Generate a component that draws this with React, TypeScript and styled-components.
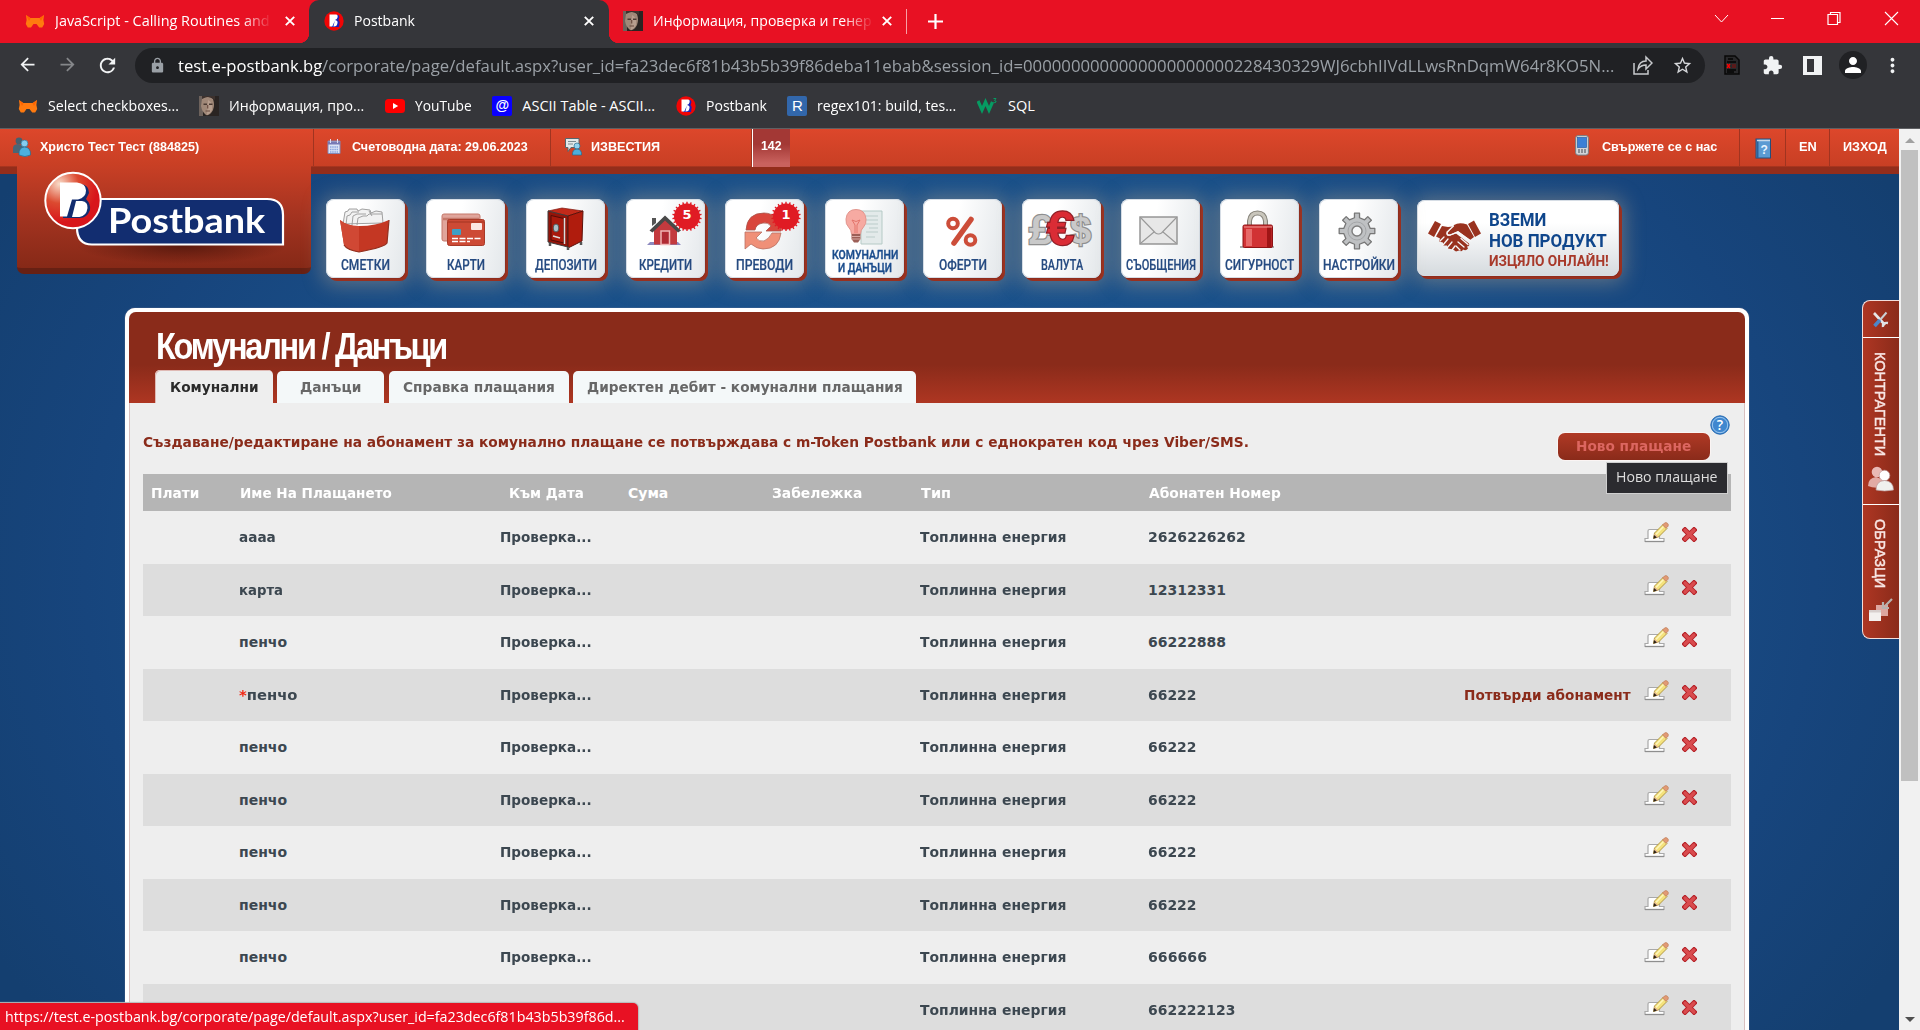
import React, { useLayoutEffect, useRef, useState } from "react";
import styled, { createGlobalStyle } from "styled-components";
import { MdExtension, MdLock, MdStarBorder, MdArrowBack, MdArrowForward, MdRefresh, MdPerson, MdMoreVert } from "react-icons/md";

const ui = `"Open Sans", "Noto Sans", sans-serif`;
const body = `"DejaVu Sans", sans-serif`;
const arial = `"Liberation Sans", sans-serif`;

const Global = createGlobalStyle`
  * { box-sizing: border-box; }
  body { margin: 0; background: #35363a; overflow: hidden; }
  svg { display: block; flex: none; }
`;

/* Text squeezed or stretched to a known advance width */
const FitBox = styled.span<{ $w: number }>`
  display: inline-block;
  flex: none;
  width: ${(p) => p.$w}px;
  white-space: nowrap;
  text-align: left;
`;
const FitInner = styled.span`
  display: inline-block;
  transform-origin: 0 50%;
`;
function Fit({ w, children }: { w: number; children: React.ReactNode }) {
  const ref = useRef<HTMLSpanElement>(null);
  const [scale, setScale] = useState(1);
  useLayoutEffect(() => {
    if (ref.current) setScale(w / ref.current.offsetWidth);
  }, [w]);
  return (
    <FitBox $w={w}>
      <FitInner ref={ref} style={{ transform: `scaleX(${scale})` }}>{children}</FitInner>
    </FitBox>
  );
}

/* ---------- browser chrome ---------- */
const Screen = styled.div`
  position: relative;
  width: 1920px;
  height: 1030px;
  overflow: hidden;
  display: flex;
  flex-direction: column;
  font-family: ${ui};
`;
const TabStrip = styled.div`
  height: 43px;
  flex: none;
  display: flex;
  background: #e81123;
  color: #fff;
  font-size: 14.5px;
`;
const BrowserTab = styled.div<{ $w: number; $pl: number; $active?: boolean }>`
  position: relative;
  width: ${(p) => p.$w}px;
  padding: 0 0 2px ${(p) => p.$pl}px;
  display: flex;
  align-items: center;
  gap: 10px;
  background: ${(p) => (p.$active ? "#35363a" : "transparent")};
  border-radius: 10px 10px 0 0;
  ${(p) =>
    p.$active &&
    `&::before, &::after { content: ""; position: absolute; bottom: 0; width: 10px; height: 10px; }
     &::before { left: -10px; background: radial-gradient(circle at 0 0, #e81123 10px, #35363a 10.5px); }
     &::after { right: -10px; background: radial-gradient(circle at 100% 0, #e81123 10px, #35363a 10.5px); }`}
`;
const Fade = styled.span`
  mask-image: linear-gradient(90deg, #000 87%, transparent 101%);
`;
const CloseSlot = styled.span<{ $r: number }>`
  margin-left: auto;
  margin-right: ${(p) => p.$r}px;
`;
const TabDivider = styled.div`
  width: 1px;
  height: 25px;
  margin: 9px 21px 0 0;
  background: #f7a0a6;
`;
const NewTab = styled.div`
  padding-top: 14px;
`;
const WindowButtons = styled.div`
  margin: 9px 21px 0 auto;
  display: flex;
  gap: 42px;
  & > :first-child { margin-right: -1px; }
`;
const Toolbar = styled.div`
  height: 43px;
  flex: none;
  display: flex;
  align-items: center;
  background: #35363a;
  padding: 1px 0 0 17px;
`;
const NavIcons = styled.div`
  display: flex;
  gap: 18.5px;
  width: 118px;
  color: #f1f3f4;
  & > :nth-child(2) { color: #85878a; }
`;
const Omnibox = styled.div`
  width: 1570px;
  height: 35px;
  border-radius: 18px;
  background: #202124;
  display: flex;
  align-items: center;
  padding-left: 14px;
  font-size: 17px;
  color: #9aa0a6;
  & > svg:first-child { margin-right: 12px; }
`;
const Host = styled.span`
  color: #fff;
`;
const OmniActions = styled.div`
  margin: 0 12px 0 auto;
  display: flex;
  align-items: center;
  gap: 19px;
  color: #d5d7da;
`;
const Extensions = styled.div`
  display: flex;
  align-items: center;
  padding-left: 19px;
  color: #f1f3f4;
  & > :nth-child(2) { margin-left: 22px; }
  & > :nth-child(3) { margin-left: 20px; }
  & > :nth-child(4) { margin-left: 17px; }
  & > :nth-child(5) { margin-left: 14px; }
`;
const Profile = styled.div`
  width: 28px;
  height: 28px;
  border-radius: 50%;
  background: #202124;
  display: grid;
  place-items: center;
`;
const Bookmarks = styled.div`
  height: 43px;
  flex: none;
  display: flex;
  align-items: center;
  padding: 0 0 3px 18px;
  gap: 20.6px;
  background: #35363a;
  border-bottom: 1px solid #5f6063;
  color: #fff;
  font-size: 14.5px;
`;
const Bookmark = styled.div`
  display: flex;
  align-items: center;
  gap: 9.5px;
  &:nth-child(n + 3) { gap: 10px; }
`;
const LetterIcon = styled.span<{ $bg: string; $bold?: boolean }>`
  width: 20px;
  height: 20px;
  border-radius: 2px;
  background: ${(p) => p.$bg};
  color: #fff;
  font: ${(p) => (p.$bold ? "bold 14px" : "15px")} / 19px ${arial};
  text-align: center;
`;

const Fox = () => (
  <svg width="20" height="20" viewBox="0 0 20 20">
    <path d="M1 4l4.500 3h9L19 4l-.6 5 .8 4-2 3.600h-3L11.500 13h-3L6 16.600H2.800L.8 13l.8-4z" fill="#ff7a0f" />
    <path d="M1 4l4.500 3.500L4 10zM19 4l-4.500 3.500L16 10z" fill="#ff6400" />
  </svg>
);
const Face = () => (
  <svg width="20" height="20" viewBox="0 0 20 20">
    <rect width="20" height="20" fill="#2a2422" />
    <path d="M0 0h4v20H0z" fill="#6d625c" />
    <path d="M3 3q6-4 11 0 2 6 0 11-3 6-7 5-4-3-5-9z" fill="#a08878" />
    <path d="M9 4q5 2 4 10-2 4-5 5z" fill="#b79e8e" />
    <path d="M4.500 8.200h3.500M10 8.200h3.500" stroke="#4b3a32" strokeWidth="1.600" />
    <path d="M6.500 15h4.500M8.700 9v3.500" stroke="#6a4c40" strokeWidth="1.200" />
    <path d="M3 3q6-5 13 1V0H3z" fill="#3d322e" />
  </svg>
);
const PbIcon = () => (
  <svg width="20" height="20" viewBox="0 0 20 20">
    <circle cx="10" cy="10" r="9.700" fill="#f00505" />
    <path d="M6 4h8.500l1 2-1 3 1.200 2-.7 5H7z" fill="#1c22b8" />
    <path d="M5.500 3.500H12q2 0 1.600 2.800Q13.200 8.500 11 9q3 .5 2.500 3-.5 3.500-3.500 3.500h-.6l1.400-5.800-2.500 5.800H5.500z" fill="#fff" />
  </svg>
);
const YouTube = () => (
  <svg width="20" height="20" viewBox="0 0 20 20">
    <rect x="0" y="3" width="20" height="14" rx="3.500" fill="#f00" />
    <path d="M8 7l5.200 3L8 13z" fill="#fff" />
  </svg>
);
const W3 = () => (
  <svg width="21" height="20" viewBox="0 0 21 20">
    <path d="M1 5l4 9 3.500-8 3.500 8 3.500-8" fill="none" stroke="#069b62" strokeWidth="3.200" />
    <path d="M16.500 2.500h2.500l-1.500 2q2 .2 1.500 1.500-1 1.200-2.500.3" fill="none" stroke="#069b62" strokeWidth="1" />
  </svg>
);
const Cross = () => (
  <svg width="10" height="10" viewBox="0 0 10 10">
    <path d="M.8.800l8.400 8.400M9.200.800L.8 9.200" stroke="#fff" strokeWidth="1.900" />
  </svg>
);

/* ---------- bank page ---------- */
const Page = styled.div`
  flex: 1;
  display: flex;
  min-height: 0;
`;
const Main = styled.div`
  position: relative;
  width: 1899px;
  overflow: hidden;
  background: radial-gradient(ellipse 1080px 800px at 50% 50%, #1b5490 0%, #1a5089 55%, #17457d 80%, #143f70 100%);
`;
const Scrollbar = styled.div`
  width: 21px;
  display: flex;
  flex-direction: column;
  align-items: center;
  background: #f1f1f1;
`;
const Thumb = styled.div`
  width: 17px;
  height: 631px;
  margin: 7px 0 auto;
  background: #c0c0c0;
`;
const Arrow = styled.div<{ $down?: boolean }>`
  width: 0;
  height: 0;
  margin: ${(p) => (p.$down ? "0 0 8px" : "9px 0 0")};
  border: 5px solid transparent;
  border-width: ${(p) => (p.$down ? "5px 5px 0" : "0 5px 5px")};
  border-top-color: ${(p) => (p.$down ? "#505050" : "transparent")};
  border-bottom-color: ${(p) => (p.$down ? "transparent" : "#a0a0a0")};
`;
const TopBar = styled.div`
  height: 45px;
  display: flex;
  background: linear-gradient(#dd472b, #c83f24 37px, #b03820 37px, #932d1b 38.5px, #932d1b);
  color: #fff;
  font: bold 13.5px ${arial};
`;
const BarCell = styled.div<{ $w?: number; $pl: number; $gap?: number; $end?: boolean }>`
  height: 37px;
  width: ${(p) => (p.$w ? p.$w + "px" : "auto")};
  padding: 0 0 2px ${(p) => p.$pl}px;
  display: flex;
  align-items: center;
  gap: ${(p) => p.$gap ?? 10}px;
  border-right: 1px solid ${(p) => (p.$end ? "transparent" : "#a03420")};
`;
const Count = styled.div`
  width: 38px;
  height: 38px;
  padding: 9px 0 0 8px;
  border-left: 1px solid #fff;
  background: linear-gradient(#a33835 0 40%, #c9625e 90%);
`;
const Spacer = styled.div`
  flex: 1;
`;
const HeaderRow = styled.div`
  display: flex;
  height: 134px;
  padding-left: 17px;
`;
const LogoPanel = styled.div`
  position: relative;
  width: 294px;
  height: 108px;
  margin-top: -8px;
  border-radius: 0 0 7px 7px;
  background: linear-gradient(#c83f25, #a33320 50%, #862917);
  border-bottom: 6px solid #672013;
`;
const Word = styled.span`
  position: absolute;
  left: 91px;
  top: 31px;
  color: #fff;
  font: bold 34px / 46px Lato, sans-serif;
`;
const Menu = styled.div`
  display: flex;
  gap: 20px;
  padding: 25px 0 0 15px;
`;
const face = `
  border-radius: 8px;
  background: linear-gradient(100deg, #fff 40%, #e3e7ea);
  box-shadow: inset 0 0 0 1px #d6dde5, 1px 1px 0 #8f2c1c, 2px 2px 0 #99301f, 3px 3px 0 #99301f, 1px 2px 20px 5px rgba(190, 170, 140, 0.42);
`;
const MenuButton = styled.div<{ $active?: boolean; $mr: number }>`
  position: relative;
  width: 79px;
  height: 79px;
  margin-right: ${(p) => p.$mr}px;
  ${face}
  color: #254a80;
  font: 500 ${(p) => (p.$active ? 13 : 15)}px / ${(p) => (p.$active ? 13 : 16)}px Roboto, sans-serif;
  display: flex;
  flex-direction: column;
  align-items: center;
  justify-content: flex-end;
  padding-bottom: ${(p) => (p.$active ? 4 : 5)}px;
  -webkit-text-stroke: ${(p) => (p.$active ? 0.4 : 0.2)}px currentColor;
  ${(p) => p.$active && "color: #1a4c8c;"}
`;
const Art = styled.svg`
  position: absolute;
  left: 0;
  top: 0;
`;
const Badge = styled.span`
  position: absolute;
  left: 46px;
  top: 2px;
  width: 30px;
  height: 30px;
  color: #fff;
  font: bold 13px / 27px ${body};
  text-align: center;
  -webkit-text-stroke: 0;
  & > svg { position: absolute; inset: 0; }
  & > b { position: relative; }
`;
const Promo = styled.div`
  width: 202px;
  height: 76px;
  margin: 1px 0 0 -1px;
  ${face}
  background: linear-gradient(#fff 30%, #d5dade);
  display: flex;
  padding: 10px 0 0 11px;
  gap: 8px;
`;
const PromoText = styled.div`
  display: flex;
  flex-direction: column;
  font: bold 17.500px / 21px Roboto, sans-serif;
  color: #0f468c;
`;
const PromoRed = styled.div`
  color: #a8392a;
  font-size: 15px;
  line-height: 18px;
`;
const HandWrap = styled.div`
  padding-top: 10px;
`;

const Panel = styled.div`
  width: 1624px;
  height: 900px;
  margin-left: 125px;
  border: solid #fff;
  border-width: 4px 4px 0;
  border-radius: 10px 10px 0 0;
  background: #eee;
  box-shadow: 0 0 0 1px #d9c0bf inset, 0 0 1px #d9b9b8;
`;
const PanelHead = styled.div`
  height: 91px;
  border-radius: 7px 7px 0 0;
  background: linear-gradient(#8a2b1a, #8a2b1a 58%, #ae3622);
  padding: 10px 0 0 27px;
`;
const Title = styled.h1`
  margin: 0;
  height: 48px;
  color: #fff;
  font: bold 36px / 49px ${arial};
  letter-spacing: -2.5px;
`;
const TabRow = styled.div`
  display: flex;
  height: 33px;
  align-items: flex-end;
  margin-left: -1px;
`;
const Tab = styled.div<{ $w: number; $gap: number; $active?: boolean }>`
  width: ${(p) => p.$w}px;
  height: ${(p) => (p.$active ? 33 : 32)}px;
  margin-right: ${(p) => p.$gap}px;
  border-radius: 5px 5px 0 0;
  background: ${(p) => (p.$active ? "#eee" : "#f4f8f9")};
  box-shadow: ${(p) => (p.$active ? "inset 1px 1px 0 #dfb9b4" : "none")};
  color: ${(p) => (p.$active ? "#2b2b2b" : "#676767")};
  font: bold 14px / ${(p) => (p.$active ? 34 : 32)}px ${body};
  text-align: center;
`;
const Body = styled.div`
  padding: 0 14px;
`;
const Notice = styled.div`
  display: flex;
  height: 71px;
  color: #8a2b1a;
  font: bold 14px / 20px ${body};
  & > :first-child { margin-top: 29px; }
`;
const Actions = styled.div`
  margin-left: auto;
  margin-right: 1px;
  display: flex;
  & > svg { margin-top: 12px; }
`;
const NewPayment = styled.div`
  position: relative;
  width: 152px;
  height: 27px;
  margin-top: 29.500px;
  padding-left: 18px;
  border-radius: 7px;
  background: linear-gradient(#b03925, #8a2b1a);
  box-shadow: 0 0 0 1px #faf4f3;
  color: #dc6660;
  font: bold 14px / 26px ${body};
`;
const Tip = styled.div`
  position: absolute;
  z-index: 2;
  left: 48px;
  top: 29px;
  width: 122px;
  height: 32px;
  padding-left: 9px;
  border: 1px solid #cfcfcf;
  background: #2b2b2f;
  color: #dedede;
  font: 15px / 27px ${ui};
`;
const cols = "96px 261px 127px 145px 148px 228px 200px 1fr";
const HeadRow = styled.div`
  display: grid;
  grid-template-columns: ${cols};
  height: 37px;
  background: #b5b5b5;
  color: #fff;
  font: bold 14px / 38px ${body};
`;
const HeadCell = styled.div<{ $pl: number }>`
  padding-left: ${(p) => p.$pl}px;
`;
const Row = styled.div<{ $odd: boolean; $h: number }>`
  display: grid;
  grid-template-columns: ${cols};
  height: ${(p) => p.$h}px;
  background: ${(p) => (p.$odd ? "#ddd" : "#eee")};
  color: #3c4750;
  font: bold 14px / 52px ${body};
`;
const Star = styled.span`
  color: #f22613;
`;
const RowActions = styled.div`
  display: flex;
  justify-content: flex-end;
  padding-right: 34px;
  color: #8a2b1a;
  & > svg:nth-last-child(2) { margin: 10px 13px 0 13px; }
  & > svg:last-child { margin-top: 16px; }
`;
const SideTabs = styled.div`
  position: absolute;
  right: 0;
  top: 171px;
  width: 37px;
  height: 339px;
  border: 1px solid #f3dedb;
  border-right: 0;
  border-radius: 8px 0 0 8px;
  background: linear-gradient(90deg, #ae3623, #8a2b1a);
  overflow: hidden;
`;
const SideTab = styled.div<{ $h: number; $pt: number }>`
  height: ${(p) => p.$h}px;
  padding-top: ${(p) => p.$pt}px;
  border-bottom: 1px solid #fff;
  display: flex;
  flex-direction: column;
  align-items: center;
  gap: 10px;
  &:last-child { border: 0; }
`;
const Vertical = styled.div<{ $h: number }>`
  width: 16px;
  height: ${(p) => p.$h}px;
  & > div {
    width: ${(p) => p.$h}px;
    height: 16px;
    transform-origin: 0 0;
    transform: translateX(15px) rotate(90deg);
    color: #f8e6e4;
    font: 15px / 16px ${arial};
    -webkit-text-stroke: 0.500px #f8e6e4;
  }
`;
const StatusBubble = styled.div`
  position: absolute;
  left: 0;
  bottom: 0;
  width: 638px;
  height: 27px;
  padding-left: 5px;
  border-radius: 0 5px 0 0;
  background: #e81123;
  box-shadow: 0 0 1px 1px #b9b9b9;
  color: #fff;
  font: 14.500px / 27px ${ui};
`;

/* Toothed outline shared by the gear and the counter badge */
function toothed(cx: number, cy: number, n: number, ri: number, ro: number, duty: number) {
  const pts: string[] = [];
  const step = Math.PI / n;
  for (let i = 0; i < n; i++) {
    const a = 2 * step * i - Math.PI / 2;
    const corners = [[-step * (duty + 0.12), ri], [-step * duty, ro], [step * duty, ro], [step * (duty + 0.12), ri]];
    corners.forEach(([d, r]) => pts.push(`${(cx + Math.cos(a + d) * r).toFixed(2)},${(cy + Math.sin(a + d) * r).toFixed(2)}`));
  }
  return pts.join(" ");
}

const Handshake = () => (
  <svg width="53" height="33" viewBox="0 0 53 33">
    <g fill="#99321f">
      <path d="M7 1l6 3-7 13-6-3.500zM46 .500l7 13L47 17 40 4z" />
      <path d="M14 6l6 1 5-.5-6 6q-1 4 3 3l6-2 13 10q1 3-2 3l1 2q-2 3-5 1-1 3-4 1l-3 1-3-2-5-1-1-3-4 0 0-3-4-1 1-3-4-2z" />
      <path d="M26 5q5-3 13-.5l7 12.500-4 3-12-9-8 3.500q-3 0-2-2z" />
    </g>
    <g stroke="#f7f8f9" strokeWidth="1.300" fill="none" strokeLinecap="round">
      <path d="M12 21l4-4M15 25l5-6M19 28l5-6M24 30l3-4" />
      <path d="M30 22l6 5M33 18.500l7 6M28 26l4 4" />
      <path d="M25.500 6L19 12q-1 4 3.500 3L30 12l13 9" />
    </g>
  </svg>
);

const art: Record<string, React.ReactNode> = {
  folder: (
    <>
      <path d="M17 25l2-12 3-1 1-2 8 0 1 2 4-2 8 1 1 3 5-2 6 1 1 11z" fill="#f2f2f2" stroke="#8a8a8a" strokeWidth=".8" />
      <path d="M20 26l1-9 3-1 2-3h7M26 26l1-9 4-2h9M31 26l1-7 5-2h4l2-2h13M43 12l3 5" fill="none" stroke="#999" strokeWidth=".9" />
      <path d="M14 21q7 6 19 6 17 0 30-6l-2 23q-2 4-28 9-12-2-15-7z" fill="#c43723" />
      <path d="M14 21q7 6 19 6v26q-12-2-15-7z" fill="#d04834" />
      <path d="M63 21l-2 23q-2 4-28 9-12-2-15-7" fill="none" stroke="#93301f" strokeWidth="1.200" />
    </>
  ),
  cards: (
    <>
      <rect x="16" y="15" width="38" height="27" rx="2" fill="#e0a59b" stroke="#c5796b" />
      <path d="M17 20h36" stroke="#c5796b" strokeWidth="2.500" />
      <rect x="21.500" y="20.500" width="37" height="26" rx="2" fill="#cd4a35" stroke="#a83a28" />
      <path d="M22 23h36" stroke="#b03c29" strokeWidth="1.500" />
      <rect x="45" y="24" width="11" height="7" rx="1" fill="#fbe6e2" />
      <rect x="26" y="30" width="9" height="6" rx="1" fill="#3f9fc4" />
      <path d="M26 39.500h30M26 42.500h18" stroke="#fff" strokeWidth="1.400" strokeDasharray="6 1.500" />
    </>
  ),
  safe: (
    <>
      <path d="M22 12l14-3 21 3-15 5z" fill="#c22a1a" stroke="#7d170e" strokeWidth=".7" />
      <path d="M22 12l20 5v31l-20-5z" fill="#941409" stroke="#3c3c3c" />
      <path d="M42 17l15-5-1 30-14 7z" fill="#b01c0d" stroke="#5c120b" />
      <path d="M25 16.500l13 3V44l-13-3z" fill="#a8190c" stroke="#530c07" />
      <ellipse cx="30" cy="29" rx="2.800" ry="4" fill="#a9c1c9" stroke="#555" />
      <path d="M27 37l7 2M38.500 19v26" stroke="#dcdcdc" strokeWidth="1.500" />
      <path d="M24 44v3M42 48v3M55 43v3" stroke="#555" strokeWidth="2.500" />
    </>
  ),
  house: (
    <>
      <path d="M21 46l3-3h28l3 3z" fill="#8d8abf" />
      <path d="M26 27v-8h4v5z" fill="#555" />
      <path d="M28 30l11-10 12 10v15.500H28z" fill="#c33a3e" />
      <path d="M39 16.500L23.500 31.500l3 2L39 21.500l13 12 3-2z" fill="#484848" />
      <rect x="35" y="32" width="8.500" height="13.500" fill="#b02a33" stroke="#efb5b5" strokeWidth="1.500" />
    </>
  ),
  transfers: (
    <>
      <path d="M21 31q1-17 18-17 8 0 13 6l4-4v16H41l5-5q-3-4-8-3-7 1-8 7z" fill="#d9463c" stroke="#a8554b" strokeWidth=".8" />
      <path d="M56 34q-2 16-18 16-6 0-12-5l-6 5V33h17l-6 6q3 4 8 3 5-2 8-8z" fill="#f09078" stroke="#b97264" strokeWidth=".8" />
    </>
  ),
  bulb: (
    <>
      <path d="M36 12h21v33H36z" fill="#e3eaea" stroke="#b5cac6" />
      <path d="M41 17h12M41 21h12M41 25h12M44 29h9M41 33h12M41 38h9" stroke="#bccbca" strokeWidth="1.200" />
      <path d="M26.500 35q0-4-3-7-3-3-2.500-8Q22 10.500 31 10.500T41 20q.5 5-2.500 8-3 3-3 7z" fill="#f6aaa2" stroke="#e2968e" />
      <path d="M27 21l3 5v8M35 21l-3 5v8M27 21q4 3 8 0" stroke="#e4746b" fill="none" />
      <path d="M26.500 35h9v5l-2.500 3.500h-4L26.500 40z" fill="#9c5f57" />
      <path d="M26.500 37.500h9M26.500 40h9" stroke="#d9aaa4" />
    </>
  ),
  percent: (
    <g fill="none" stroke="#cc4d39" strokeWidth="4">
      <circle cx="30" cy="24.500" r="4.800" />
      <circle cx="47.500" cy="41" r="4.800" />
      <path d="M48 20.500L31 44" strokeWidth="5.500" strokeLinecap="round" />
    </g>
  ),
  currency: (
    <g fontFamily="Liberation Sans" fontWeight="700" paintOrder="stroke">
      <text x="7" y="45" fontSize="43" fill="#c9c9c9" stroke="#8f8f8f" strokeWidth="2.400">£</text>
      <text x="48" y="44" fontSize="38" fill="#c9c9c9" stroke="#8f8f8f" strokeWidth="2.400">$</text>
      <text x="25" y="46" fontSize="49" fill="#da2c35" stroke="#8f2027" strokeWidth="2.400">€</text>
    </g>
  ),
  mail: (
    <>
      <rect x="19" y="18" width="37" height="27" fill="#e7e7e7" stroke="#8f8f8f" strokeWidth="1.400" />
      <path d="M20 19l14.500 15q3 2 6 0L55 19M20 44l13-11M55 44L42 33" fill="none" stroke="#999" strokeWidth="1.100" />
    </>
  ),
  lock: (
    <>
      <path d="M29.500 27v-5q1-8 8-8t8 8v5" fill="none" stroke="#858279" strokeWidth="5" />
      <path d="M29.500 27v-5q1-8 8-8t8 8v5" fill="none" stroke="#c9c6bc" strokeWidth="2.800" />
      <path d="M20 48h34" stroke="#aaa" strokeWidth="2" />
      <rect x="23" y="26" width="29.500" height="22.500" rx="1.500" fill="#d13234" stroke="#8e1315" />
      <rect x="26" y="30" width="6" height="17" fill="#e76a69" />
      <rect x="47" y="28" width="4.500" height="20" fill="#9f1516" />
      <path d="M24 28h28" stroke="#ee9a96" />
    </>
  ),
  gear: (
    <>
      <polygon points={toothed(38, 32, 8, 13.5, 18, 0.36)} fill="#bfc1c3" stroke="#777" strokeWidth="1.300" strokeLinejoin="round" />
      <circle cx="38" cy="32" r="9" fill="none" stroke="#a4a6a8" strokeWidth="1" />
      <circle cx="38" cy="32" r="5" fill="#f7f8f9" stroke="#7d7d7d" strokeWidth="1.400" />
    </>
  ),
};

type Item = { icon: string; lines: [string, number][]; badge?: string; mr?: number };
const menu: Item[] = [
  { icon: "folder", lines: [["СМЕТКИ", 49]], mr: 1 },
  { icon: "cards", lines: [["КАРТИ", 38]], mr: 1 },
  { icon: "safe", lines: [["ДЕПОЗИТИ", 62]], mr: 1 },
  { icon: "house", lines: [["КРЕДИТИ", 53]], badge: "5" },
  { icon: "transfers", lines: [["ПРЕВОДИ", 57]], badge: "1", mr: 1 },
  { icon: "bulb", lines: [["КОМУНАЛНИ", 66], ["И ДАНЪЦИ", 54]], mr: -1 },
  { icon: "percent", lines: [["ОФЕРТИ", 48]] },
  { icon: "currency", lines: [["ВАЛУТА", 42]] },
  { icon: "mail", lines: [["СЪОБЩЕНИЯ", 70]] },
  { icon: "lock", lines: [["СИГУРНОСТ", 69]] },
  { icon: "gear", lines: [["НАСТРОЙКИ", 72]] },
];

const names: [string, number][] = [
  ["аааа", 37], ["карта", 44.5], ["пенчо", 48], ["*пенчо", 58], ["пенчо", 48],
  ["пенчо", 48], ["пенчо", 48], ["пенчо", 48], ["пенчо", 48], ["", 0],
];
const numbers = ["2626226262", "12312331", "66222888", "66222", "66222", "66222", "66222", "66222", "666666", "662222123"];
const heads: [string, number, number][] = [
  ["Плати", 7.5, 48], ["Име На Плащането", 1, 152], ["Към Дата", 9, 75], ["Сума", 1, 40],
  ["Забележка", 0, 90], ["Тип", 1, 30], ["Абонатен Номер", 0.5, 132],
];

const Pencil = () => (
  <svg width="25" height="22" viewBox="0 0 25 22">
    <path d="M1 17.500h3V10q0-1.500 1.500-1.500H14q1.500 0 1.500 1.500v7.500h4.500v3H1z" fill="#fff" stroke="#a9a9a9" strokeWidth="1.200" />
    <path d="M1 20.500h19" stroke="#8e8e8e" strokeWidth="1.300" />
    <path d="M9.500 17.500l1-5.500L19 3.500l4 4-8.500 8.500z" fill="#f4e27c" stroke="#aa8e3a" strokeWidth=".9" />
    <path d="M12 13.500L20 5" stroke="#fdf6bb" strokeWidth="1.500" />
    <path d="M9.500 17.500l1-5 4 3.700z" fill="#e7b98c" />
    <path d="M9.300 17.700l.7-3.700 3 2.600z" fill="#2d2419" />
    <path d="M18.500 4l2-2q1.500-1 3 .3t.5 3l-2 2z" fill="#e19a75" stroke="#bf7c58" strokeWidth=".7" />
  </svg>
);
const Delete = () => (
  <svg width="15" height="15" viewBox="0 0 15 15">
    <path d="M3 3l9 9M12 3l-9 9" stroke="#b52026" strokeWidth="5.200" strokeLinecap="square" strokeLinejoin="round" />
    <path d="M3 3l9 9M12 3l-9 9" stroke="#d94b4e" strokeWidth="3.300" strokeLinecap="round" />
  </svg>
);
const Users = () => (
  <svg width="18" height="20" viewBox="0 0 18 20">
    <circle cx="6" cy="4" r="3.400" fill="#47606e" />
    <path d="M0 16V11q0-3.500 5-4l5 2v7z" fill="#4a6575" />
    <circle cx="11.500" cy="6.500" r="3.400" fill="#86cdf0" stroke="#2e7a9f" strokeWidth=".7" />
    <path d="M6 18q-.5-7.500 5.500-8 6.500.5 6 8-5.500 3-11.500 0z" fill="#4eb0de" stroke="#236c91" strokeWidth=".7" />
  </svg>
);
const Calendar = () => (
  <svg width="15" height="16" viewBox="0 0 15 16">
    <path d="M1 2h12v12.500H1z" fill="#dce4f7" stroke="#8487b4" />
    <path d="M1 2.500h12v3H1z" fill="#7779b5" />
    <path d="M3 8h8M3 10.500h8M3 13h8" stroke="#8aa4dd" strokeWidth="1.500" strokeDasharray="1.500 .7" />
    <path d="M3.500 0v4M10.500 0v4" stroke="#dfdff3" />
  </svg>
);
const News = () => (
  <svg width="17" height="18" viewBox="0 0 17 18">
    <path d="M.5.500H14v9H6l-3 4v-4H.5z" fill="#e3e8e9" stroke="#56666d" />
    <path d="M3 3.500h8M3 6h5" stroke="#7b8a90" />
    <circle cx="12" cy="8" r="3" fill="#8fd1f0" stroke="#2b6d8e" strokeWidth=".7" />
    <path d="M7.500 17q-.5-5.500 4.500-6 5 .5 4.500 6z" fill="#4eaedb" stroke="#236c91" strokeWidth=".7" />
  </svg>
);
const Phone = () => (
  <svg width="14" height="24" viewBox="0 0 14 24">
    <rect x=".6" y=".6" width="12.800" height="19.500" rx="2.500" fill="#d2d5d8" stroke="#777d84" />
    <rect x="2.500" y="2.500" width="9" height="10" fill="#3b80d6" stroke="#2860a8" strokeWidth=".7" />
    <path d="M4 14v4M7 14v4M10 14v4" stroke="#71767c" strokeWidth="1.500" />
  </svg>
);
const HelpBook = () => (
  <svg width="17" height="24" viewBox="0 -3 17 24">
    <rect x="1" y="1" width="14.500" height="19" fill="#5b9bd3" stroke="#244e7c" />
    <path d="M2.500 1v19" stroke="#2d6299" strokeWidth="2" />
    <path d="M2 2.500h13" stroke="#c7d9ea" strokeWidth="1.500" />
    <text x="5.500" y="16" fontFamily="Liberation Sans" fontWeight="700" fontSize="12" fill="#e8f4ff">?</text>
  </svg>
);

export default function App() {
  return (
    <Screen>
      <Global />
      <TabStrip>
        <BrowserTab $w={309} $pl={25}>
          <Fox /><Fade><Fit w={215}>JavaScript - Calling Routines and</Fit></Fade>
          <CloseSlot $r={14}><Cross /></CloseSlot>
        </BrowserTab>
        <BrowserTab $w={300} $pl={15} $active>
          <PbIcon /><Fit w={61}>Postbank</Fit>
          <CloseSlot $r={15.5}><Cross /></CloseSlot>
        </BrowserTab>
        <BrowserTab $w={297} $pl={14}>
          <Face /><Fade><Fit w={219}>Информация, проверка и генер</Fit></Fade>
          <CloseSlot $r={14}><Cross /></CloseSlot>
        </BrowserTab>
        <TabDivider />
        <NewTab>
          <svg width="15" height="15" viewBox="0 0 15 15"><path d="M7.500 0v15M0 7.500h15" stroke="#fff" strokeWidth="2.200" /></svg>
        </NewTab>
        <WindowButtons>
          <svg width="15" height="18" viewBox="0 0 15 18"><path d="M1 6l6.500 7L14 6" fill="none" stroke="#fff" /></svg>
          <svg width="15" height="18" viewBox="0 0 15 18"><path d="M1 9.500h13" stroke="#fff" /></svg>
          <svg width="15" height="18" viewBox="0 0 15 18"><path d="M1 5.500h9.500v10H1zM3.500 5.500v-2H13v10h-2.500" fill="none" stroke="#fff" strokeWidth="1.200" /></svg>
          <svg width="15" height="18" viewBox="0 0 15 18"><path d="M1 3l13 13M14 3L1 16" stroke="#fff" strokeWidth="1.100" /></svg>
        </WindowButtons>
      </TabStrip>
      <Toolbar>
        <NavIcons><MdArrowBack size={21} /><MdArrowForward size={21} /><MdRefresh size={23} /></NavIcons>
        <Omnibox>
          <MdLock size={17} />
          <Host><Fit w={144}>test.e-postbank.bg</Fit></Host>
          <Fit w={1292}>/corporate/page/default.aspx?user_id=fa23dec6f81b43b5b39f86deba11ebab&amp;session_id=0000000000000000000000228430329WJ6cbhIIVdLLwsRnDqmW64r8KO5N...</Fit>
          <OmniActions>
            <svg width="20" height="20" viewBox="0 0 20 20">
              <path d="M1 8v11h14v-4M5 14q1-8 8-8V2l6 6-6 6v-4q-5 0-8 4z" fill="none" stroke="#c8cacd" strokeWidth="1.500" />
            </svg>
            <MdStarBorder size={21} />
          </OmniActions>
        </Omnibox>
        <Extensions>
          <svg width="16" height="20" viewBox="0 0 16 20">
            <path d="M1 1h10l4 4v14H1z" fill="#29292b" stroke="#080808" strokeWidth="1.500" />
            <path d="M4 4h5M3 7h9M3 15h9M3 17h7" stroke="#050505" strokeWidth="1.300" />
            <path d="M3 9l3 4M6 9l-3 4" stroke="#f00" strokeWidth="1.300" /><path d="M8 9h4v4H8z" fill="#5a1a1a" />
          </svg>
          <MdExtension size={21} />
          <svg width="19" height="19" viewBox="0 0 19 19"><path d="M0 0h19v19H0zM4 3v13h7V3z" fill="#f1f3f4" fillRule="evenodd" /></svg>
          <Profile><MdPerson size={24} color="#fff" /></Profile>
          <MdMoreVert size={23} />
        </Extensions>
      </Toolbar>
      <Bookmarks>
        <Bookmark><Fox /><Fit w={131}>Select checkboxes...</Fit></Bookmark>
        <Bookmark><Face /><Fit w={135.500}>Информация, про...</Fit></Bookmark>
        <Bookmark><YouTube /><Fit w={57}>YouTube</Fit></Bookmark>
        <Bookmark><LetterIcon $bg="#0a00ff" $bold>@</LetterIcon><Fit w={133}>ASCII Table - ASCII...</Fit></Bookmark>
        <Bookmark><PbIcon /><Fit w={61}>Postbank</Fit></Bookmark>
        <Bookmark><LetterIcon $bg="#3267ab">R</LetterIcon><Fit w={139}>regex101: build, tes...</Fit></Bookmark>
        <Bookmark><W3 /><Fit w={27}>SQL</Fit></Bookmark>
      </Bookmarks>
      <Page>
        <Main>
          <TopBar>
            <BarCell $w={314} $pl={13} $gap={9}><Users /><Fit w={159}>Христо Тест Тест (884825)</Fit></BarCell>
            <BarCell $w={237} $pl={13}><Calendar /><Fit w={176}>Счетоводна дата: 29.06.2023</Fit></BarCell>
            <BarCell $w={201} $pl={14} $gap={9}><News /><Fit w={69}>ИЗВЕСТИЯ</Fit></BarCell>
            <Count><Fit w={21}>142</Fit></Count>
            <Spacer />
            <BarCell $w={165} $pl={0} $gap={13}><Phone /><Fit w={115}>Свържете се с нас</Fit></BarCell>
            <BarCell $w={46} $pl={15}><HelpBook /></BarCell>
            <BarCell $w={44} $pl={13}><Fit w={18}>EN</Fit></BarCell>
            <BarCell $w={69} $pl={13} $end><Fit w={44}>ИЗХОД</Fit></BarCell>
          </TopBar>
          <HeaderRow>
            <LogoPanel>
              <svg width="294" height="102" viewBox="17 166 294 102">
                <defs>
                  <radialGradient id="ball" cx=".25" cy=".2" r=".7">
                    <stop offset="0" stopColor="#f9dcc9" /><stop offset=".5" stopColor="#dc4a30" /><stop offset="1" stopColor="#d8161b" />
                  </radialGradient>
                  <radialGradient id="shade"><stop offset="0" stopColor="#4c150b" stopOpacity=".8" /><stop offset="1" stopColor="#4c150b" stopOpacity="0" /></radialGradient>
                </defs>
                <ellipse cx="182" cy="246" rx="105" ry="18" fill="url(#shade)" />
                <path d="M77 199h190q16 0 16 16v29.500H92q-15 0-15-17z" fill="#122d70" stroke="#fff" strokeWidth="2.200" />
                <circle cx="73" cy="200.500" r="27.700" fill="url(#ball)" stroke="#fff" strokeWidth="2" />
                <path d="M61 184h20q8 1 8 9l-3 6q5 5 4 11-3 8-10 8H63z" fill="#122d70" />
                <path d="M60 182.500h17q9 1 9 8 0 7-8 9h-6l-5 17h-7z" fill="#fff" />
                <path d="M76 201h6q6 1 5.500 7-1 8-8 9H72z" fill="#fff" />
              </svg>
              <Word><Fit w={157}>Postbank</Fit></Word>
            </LogoPanel>
            <Menu>
              {menu.map((m) => (
                <MenuButton key={m.icon} $active={m.lines.length > 1} $mr={m.mr ?? 0}>
                  <Art width="79" height="60" viewBox="0 0 79 60">{art[m.icon]}</Art>
                  {m.badge && (
                    <Badge>
                      <svg width="30" height="30"><polygon points={toothed(15, 15.5, 22, 13, 14.7, 0.3)} fill="#e01b24" /></svg>
                      <b>{m.badge}</b>
                    </Badge>
                  )}
                  {m.lines.map(([t, w]) => <Fit key={t} w={w}>{t}</Fit>)}
                </MenuButton>
              ))}
              <Promo>
                <HandWrap><Handshake /></HandWrap>
                <PromoText>
                  <Fit w={57}>ВЗЕМИ</Fit>
                  <Fit w={118}>НОВ ПРОДУКТ</Fit>
                  <PromoRed><Fit w={120}>ИЗЦЯЛО ОНЛАЙН!</Fit></PromoRed>
                </PromoText>
              </Promo>
            </Menu>
          </HeaderRow>
          <Panel>
            <PanelHead>
              <Title><Fit w={290}>Комунални / Данъци</Fit></Title>
              <TabRow>
                <Tab $w={118} $gap={4} $active><Fit w={89}>Комунални</Fit></Tab>
                <Tab $w={107} $gap={5}><Fit w={61}>Данъци</Fit></Tab>
                <Tab $w={180} $gap={4}><Fit w={152}>Справка плащания</Fit></Tab>
                <Tab $w={343} $gap={0}><Fit w={316}>Директен дебит - комунални плащания</Fit></Tab>
              </TabRow>
            </PanelHead>
            <Body>
              <Notice>
                <Fit w={1106}>Създаване/редактиране на абонамент за комунално плащане се потвърждава с m-Token Postbank или с еднократен код чрез Viber/SMS.</Fit>
                <Actions>
                  <NewPayment>
                    <Fit w={115}>Ново плащане</Fit>
                    <Tip><Fit w={102}>Ново плащане</Fit></Tip>
                  </NewPayment>
                  <svg width="20" height="20" viewBox="0 0 20 20">
                    <circle cx="10" cy="10" r="9.200" fill="#3f87cf" stroke="#2468b0" />
                    <circle cx="10" cy="10" r="7.700" fill="none" stroke="#9cc7ef" />
                    <text x="6.800" y="14.800" fontFamily="Open Sans" fontWeight="600" fontSize="14" fill="#fff">?</text>
                  </svg>
                </Actions>
              </Notice>
              <HeadRow>
                {heads.map(([t, pl, w]) => <HeadCell key={t} $pl={pl}><Fit w={w}>{t}</Fit></HeadCell>)}
              </HeadRow>
              {numbers.map((n, i) => (
                <Row key={i} $odd={i % 2 === 1} $h={i % 2 ? 52 : 53}>
                  <div />
                  <div>
                    {names[i][0] && (
                      <Fit w={names[i][1]}>
                        {names[i][0][0] === "*" ? <><Star>*</Star>пенчо</> : names[i][0]}
                      </Fit>
                    )}
                  </div>
                  <div>{names[i][0] && <Fit w={92}>Проверка...</Fit>}</div>
                  <div />
                  <div />
                  <div><Fit w={146}>Топлинна енергия</Fit></div>
                  <div><Fit w={n.length * 9.75}>{n}</Fit></div>
                  <RowActions>
                    {i === 3 && <Fit w={167}>Потвърди абонамент</Fit>}
                    <Pencil /><Delete />
                  </RowActions>
                </Row>
              ))}
            </Body>
          </Panel>
          <SideTabs>
            <SideTab $h={37} $pt={10}>
              <svg width="18" height="18" viewBox="0 0 18 18">
                <path d="M2 2l11 12" stroke="#e8e8e8" strokeWidth="2.600" />
                <path d="M14.500 1.500L8 9" stroke="#c9ced3" strokeWidth="2" />
                <path d="M8 9l-5.500 6" stroke="#4c86c9" strokeWidth="3.600" />
                <path d="M11 16q-1-5 5-4" fill="none" stroke="#dfe2e4" strokeWidth="2.400" />
              </svg>
            </SideTab>
            <SideTab $h={167} $pt={14}>
              <Vertical $h={104}><div><Fit w={104}>КОНТРАГЕНТИ</Fit></div></Vertical>
              <svg width="26" height="26" viewBox="0 0 26 26">
                <circle cx="9" cy="6" r="5.300" fill="#e9b9b4" />
                <path d="M0 20q0-8 8-9l8 3v7q-10 2-16-1z" fill="#e2aaa4" />
                <circle cx="16.500" cy="9.500" r="5.300" fill="#fff" stroke="#b99" strokeWidth=".7" />
                <path d="M8 24q0-9 8.500-9.500 9 .5 9 9.500-9 2-17.500 0z" fill="#f0f0ee" stroke="#b99" strokeWidth=".7" />
              </svg>
            </SideTab>
            <SideTab $h={133} $pt={14}>
              <Vertical $h={69}><div><Fit w={69}>ОБРАЗЦИ</Fit></div></Vertical>
              <svg width="26" height="24" viewBox="0 0 26 24">
                <path d="M8 7h12v11H8z" fill="#dda69f" />
                <path d="M1 12h12v11H1z" fill="#f3f0ee" /><path d="M1 12h12v2.500H1z" fill="#d8cfcd" />
                <path d="M24 1l-7 7M15 4v6h6" stroke="#b7b1ae" strokeWidth="2.200" fill="none" />
              </svg>
            </SideTab>
          </SideTabs>
        </Main>
        <Scrollbar><Arrow /><Thumb /><Arrow $down /></Scrollbar>
      </Page>
      <StatusBubble><Fit w={620}>https://test.e-postbank.bg/corporate/page/default.aspx?user_id=fa23dec6f81b43b5b39f86d...</Fit></StatusBubble>
    </Screen>
  );
}
